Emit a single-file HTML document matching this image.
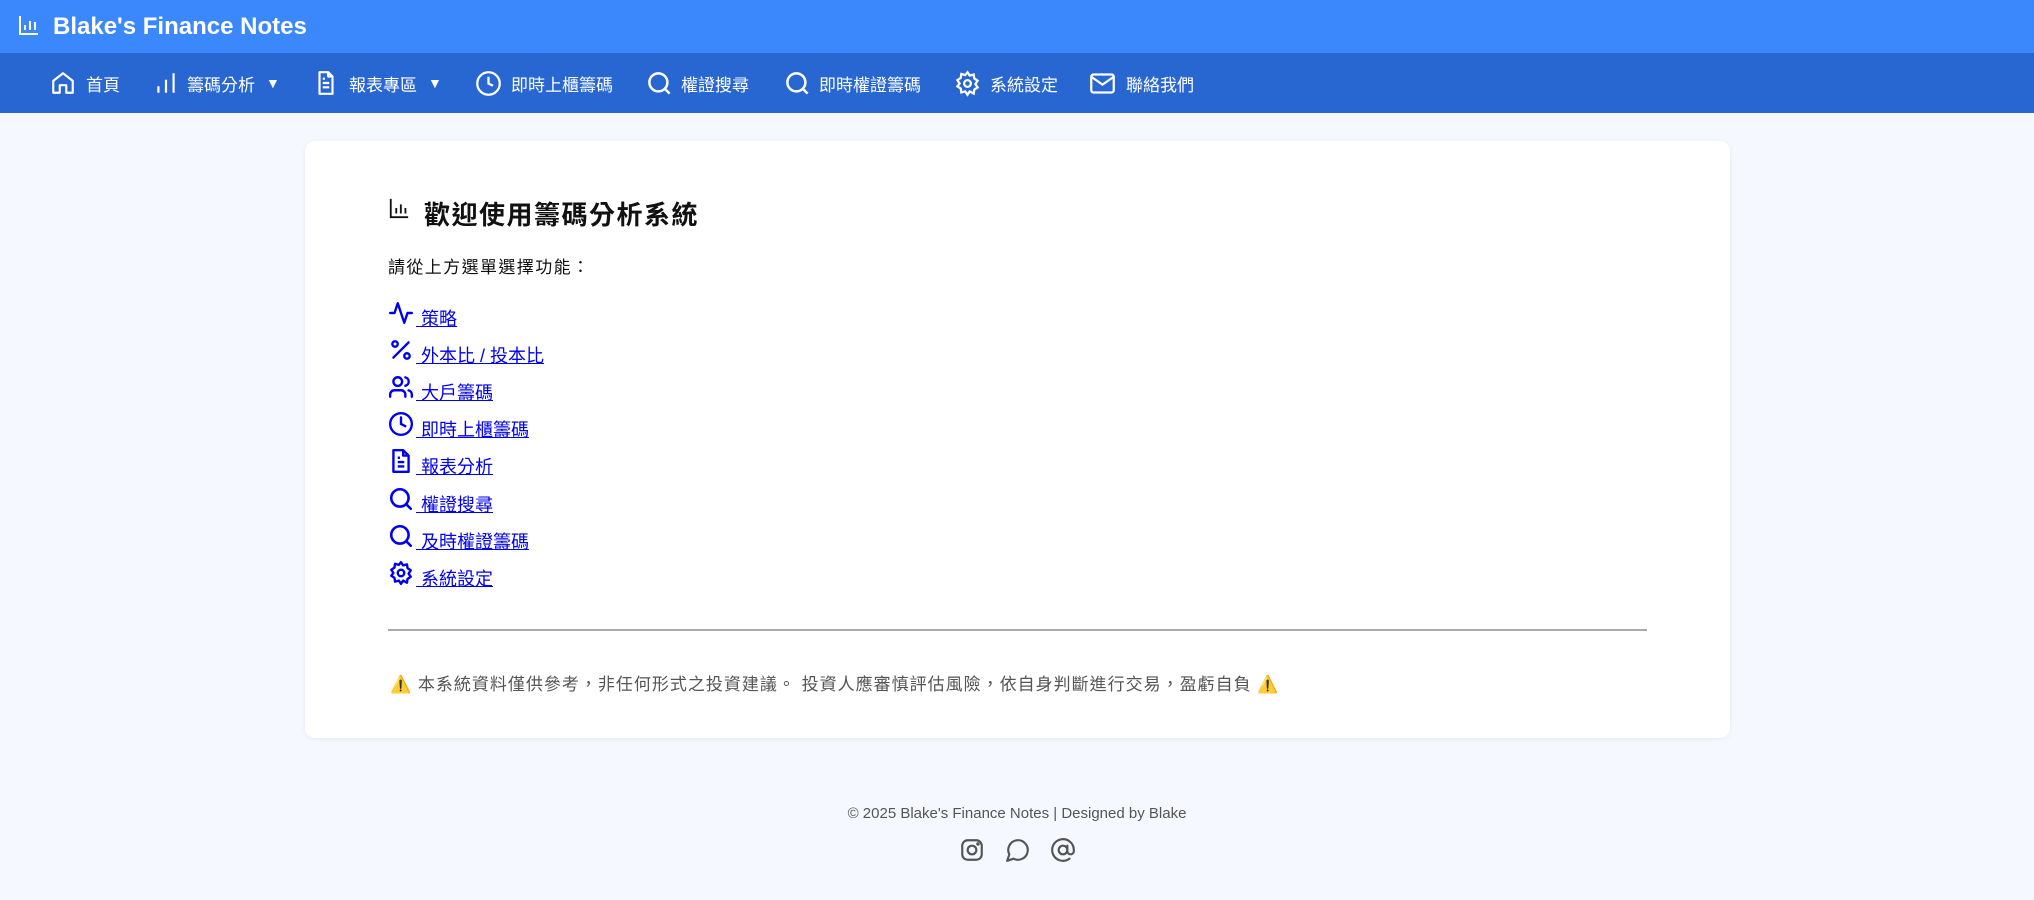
<!DOCTYPE html>
<html><head><meta charset="utf-8"><style>
*{margin:0;padding:0;box-sizing:border-box}
body{width:2034px;height:900px;background:#f5f8fe;font-family:"Liberation Sans","Noto Sans CJK TC",sans-serif;position:relative;overflow:hidden}
.top{position:absolute;left:0;top:0;width:2034px;height:53px;background:#3b88fd;color:#fff}
.top .t{position:absolute;left:53px;top:13px;font-size:24px;font-weight:bold}
.nav{position:absolute;left:0;top:53px;width:2034px;height:60px;background:#2867d2;color:#fff;font-size:17px}
.nav .i{position:absolute;top:0;height:60px;display:flex;align-items:center}
.nav svg{position:absolute;top:17px}
.card{position:absolute;left:305px;top:141px;width:1425px;height:597px;background:#fff;border-radius:10px;box-shadow:0 1px 6px rgba(0,0,0,.06)}
h1{position:absolute;left:424px;top:195px;font-size:26px;letter-spacing:1.5px;font-weight:bold;color:#111}
.sub{position:absolute;left:388px;top:253px;font-size:17px;letter-spacing:1.4px;color:#111}
.row{position:absolute;left:388px;height:30px}
.row svg{position:absolute;left:0;top:0}
.row a{position:absolute;left:28px;top:5px;font-size:18px;color:#0000ee;white-space:pre;text-decoration:underline}
hr{position:absolute;left:388px;top:629px;width:1259px;border:0;border-top:2px solid #aaa}
.warn{position:absolute;left:390px;top:670px;font-size:17px;letter-spacing:1px;color:#555;white-space:pre}
.foot{position:absolute;left:0;width:2034px;top:805px;text-align:center;font-size:15px;color:#555}
</style></head><body>
<div class="top">
<svg style="position:absolute;left:17px;top:13px" width="24" height="24" viewBox="0 0 24 24" fill="none" stroke="#fff" stroke-width="2"><path d="M3 3v18h18M8 17v-5M13 17V8M18 17v-8"/></svg>
<div class="t">Blake's Finance Notes</div></div>
<div class="nav">
<svg style="left:50px" width="26" height="26" viewBox="0 0 24 24" fill="none" stroke="#fff" stroke-width="2" stroke-linejoin="round"><path d="M3 10l9-7 9 7v11h-6v-7H9v7H3z"/></svg><div class="i" style="left:86px">首頁</div>
<svg style="left:153px" width="26" height="26" viewBox="0 0 24 24" fill="none" stroke="#fff" stroke-width="2"><path d="M5 21v-6M12 21V9M19 21V3"/></svg><div class="i" style="left:187px">籌碼分析</div><div class="i" style="left:266px;font-size:14px">▼</div>
<svg style="left:313px" width="26" height="26" viewBox="0 0 24 24" fill="none" stroke="#fff" stroke-width="2" stroke-linejoin="round"><path d="M14 2H6v20h12V6zM14 2v4h4M9 12h6M9 16h6M9 8h2"/></svg><div class="i" style="left:349px">報表專區</div><div class="i" style="left:428px;font-size:14px">▼</div>
<svg style="left:475px" width="27" height="27" viewBox="0 0 24 24" fill="none" stroke="#fff" stroke-width="2"><circle cx="12" cy="12" r="10"/><path d="M12 6v6l4 2"/></svg><div class="i" style="left:511px">即時上櫃籌碼</div>
<svg style="left:646px" width="27" height="27" viewBox="0 0 24 24" fill="none" stroke="#fff" stroke-width="2.2"><circle cx="11" cy="11" r="8"/><path d="M21 21l-4.3-4.3"/></svg><div class="i" style="left:681px">權證搜尋</div>
<svg style="left:784px" width="27" height="27" viewBox="0 0 24 24" fill="none" stroke="#fff" stroke-width="2.2"><circle cx="11" cy="11" r="8"/><path d="M21 21l-4.3-4.3"/></svg><div class="i" style="left:819px">即時權證籌碼</div>
<svg style="left:954px" width="27" height="27" viewBox="0 0 24 24" fill="none" stroke="#fff" stroke-width="2"><circle cx="12" cy="12" r="3"/><path d="M12 2l2 3 3.5-1 .5 3.5 3 2-2 3 2 3-3 2-.5 3.5L14 19l-2 3-2-3-3.5 1L6 16.5 3 14.5l2-2.5-2-3 3-2L6.5 3.5 10 4.5z"/></svg><div class="i" style="left:990px">系統設定</div>
<svg style="left:1089px" width="27" height="27" viewBox="0 0 24 24" fill="none" stroke="#fff" stroke-width="2"><rect x="2" y="4" width="20" height="16" rx="2"/><path d="M2 6l10 7 10-7"/></svg><div class="i" style="left:1126px">聯絡我們</div>
</div>
<div class="card"></div>
<svg style="position:absolute;left:388px;top:197px" width="22" height="22" viewBox="0 0 24 24" fill="none" stroke="#111" stroke-width="2"><path d="M3 2v20h19M9 18v-6M14 18V8M19 18v-6"/></svg>
<h1>歡迎使用籌碼分析系統</h1>
<div class="sub">請從上方選單選擇功能：</div>
<div class="row" style="top:300px"><svg width="26" height="26" viewBox="0 0 24 24" fill="none" stroke="#0000ee" stroke-width="2.2" stroke-linejoin="round" stroke-linecap="round"><path d="M2 12h4l3-9 6 18 3-9h4"/></svg><a> 策略</a></div>
<div class="row" style="top:337px"><svg width="26" height="26" viewBox="0 0 24 24" fill="none" stroke="#0000ee" stroke-width="2.2" stroke-linecap="round"><path d="M19 5L5 19"/><circle cx="6.5" cy="6.5" r="2.5"/><circle cx="17.5" cy="17.5" r="2.5"/></svg><a> 外本比 / 投本比</a></div>
<div class="row" style="top:374px"><svg width="26" height="26" viewBox="0 0 24 24" fill="none" stroke="#0000ee" stroke-width="2.2" stroke-linecap="round"><circle cx="9" cy="7" r="4"/><path d="M2 21v-2a4 4 0 0 1 4-4h6a4 4 0 0 1 4 4v2M16 3.1a4 4 0 0 1 0 7.8M22 21v-2a4 4 0 0 0-3-3.9"/></svg><a> 大戶籌碼</a></div>
<div class="row" style="top:411px"><svg width="26" height="26" viewBox="0 0 24 24" fill="none" stroke="#0000ee" stroke-width="2.2" stroke-linecap="round"><circle cx="12" cy="12" r="10"/><path d="M12 6v6l4 2"/></svg><a> 即時上櫃籌碼</a></div>
<div class="row" style="top:448px"><svg width="26" height="26" viewBox="0 0 24 24" fill="none" stroke="#0000ee" stroke-width="2.2" stroke-linejoin="round"><path d="M14 2H5v20h14V7zM14 2v5h5M9 13h6M9 17h6M9 9h2"/></svg><a> 報表分析</a></div>
<div class="row" style="top:486px"><svg width="26" height="26" viewBox="0 0 24 24" fill="none" stroke="#0000ee" stroke-width="2.4" stroke-linecap="round"><circle cx="11" cy="11" r="8"/><path d="M21 21l-4.3-4.3"/></svg><a> 權證搜尋</a></div>
<div class="row" style="top:523px"><svg width="26" height="26" viewBox="0 0 24 24" fill="none" stroke="#0000ee" stroke-width="2.4" stroke-linecap="round"><circle cx="11" cy="11" r="8"/><path d="M21 21l-4.3-4.3"/></svg><a> 及時權證籌碼</a></div>
<div class="row" style="top:560px"><svg width="26" height="26" viewBox="0 0 24 24" fill="none" stroke="#0000ee" stroke-width="2.2" stroke-linejoin="round"><circle cx="12" cy="12" r="3"/><path d="M12 2l2 3 3.5-1 .5 3.5 3 2-2 3 2 3-3 2-.5 3.5L14 19l-2 3-2-3-3.5 1L6 16.5 3 14.5l2-2.5-2-3 3-2L6.5 3.5 10 4.5z"/></svg><a> 系統設定</a></div>
<hr>
<div class="warn">⚠️ 本系統資料僅供參考，非任何形式之投資建議。 投資人應審慎評估風險，依自身判斷進行交易，盈虧自負 ⚠️</div>
<div class="foot">© 2025 Blake's Finance Notes | Designed by Blake</div>
<svg style="position:absolute;left:959px;top:837px" width="26" height="26" viewBox="0 0 24 24" fill="none" stroke="#555" stroke-width="2"><rect x="3" y="3" width="18" height="18" rx="5"/><circle cx="12" cy="12" r="4"/><circle cx="17.5" cy="6.5" r=".6" fill="#555"/></svg>
<svg style="position:absolute;left:1005px;top:837px" width="26" height="26" viewBox="0 0 24 24" fill="none" stroke="#555" stroke-width="2" stroke-linejoin="round"><path d="M7.9 20A9 9 0 1 0 4 16.1L2 22z"/></svg>
<svg style="position:absolute;left:1050px;top:837px" width="26" height="26" viewBox="0 0 24 24" fill="none" stroke="#555" stroke-width="2" stroke-linecap="round"><circle cx="12" cy="12" r="4"/><path d="M16 8v5a3 3 0 0 0 6 0v-1a10 10 0 1 0-4 8"/></svg>
</body></html>
